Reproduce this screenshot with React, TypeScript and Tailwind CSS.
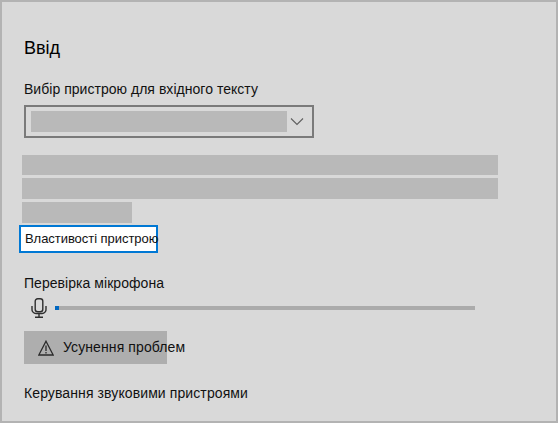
import React from "react";

export default function App() {
  return (
    <div className="w-[558px] h-[423px] bg-[#d9d9d9] border-2 border-[#b3b3b3] pl-[22px] pt-[36px] overflow-hidden text-black font-['Liberation_Sans',Arial,sans-serif]">
      <h2 className="text-[18px] leading-[20px] font-normal">Ввід</h2>

      <div className="mt-[22px] text-[14px] leading-[18px] tracking-[0.03px] text-[#111]">Вибір пристрою для вхідного тексту</div>

      <div className="mt-[7px] w-[290px] h-[33px] border-2 border-[#7a7a7a] flex items-center pl-[5px]">
        <div className="w-[256px] h-[21px] bg-[#b9b9b9]" />
        <svg className="ml-[2px] mt-[1px] shrink-0" width="16" height="10" viewBox="0 0 16 10" fill="none">
          <path d="M2 1.5 L8 7.5 L14 1.5" stroke="#5f5f5f" strokeWidth="1.1" />
        </svg>
      </div>

      {/* blanked-out description */}
      <div className="mt-[17px] -ml-[2px] flex flex-col gap-[3px]">
        <div className="w-[476px] h-[20px] bg-[#b9b9b9]" />
        <div className="w-[476px] h-[21px] bg-[#b9b9b9]" />
        <div className="w-[110px] h-[21px] bg-[#b9b9b9]" />
      </div>

      <div className="mt-[2px] -ml-[5px] w-[139px] h-[28px] border-2 border-[#0078d4] bg-white flex items-center pl-[4px] whitespace-nowrap text-[13px] tracking-[-0.05px] text-[#111]">
        Властивості пристрою
      </div>

      <div className="mt-[21px] text-[14px] leading-[18px] tracking-[0.05px] text-[#111]">Перевірка мікрофона</div>

      <div className="mt-[6px] flex items-center h-[20px]">
        <svg className="ml-[7px] shrink-0" width="16" height="20" viewBox="0 0 16 20" fill="none" stroke="#2e2e2e" strokeWidth="1.4">
          <rect x="4.2" y="0.7" width="7.6" height="13" rx="2.5" />
          <path d="M1 8 V11 A4 4 0 0 0 5 15.5 H11 A4 4 0 0 0 15 11 V8" />
          <path d="M8 15.5 V19 M4 19.3 H12" />
        </svg>
        <div className="ml-[8px] w-[420px] h-[4px] bg-[#ababab]">
          <div className="w-[4px] h-[4px] bg-[#0067c0]" />
        </div>
      </div>

      <div className="mt-[13px] w-[143px] h-[33px] bg-[#aeaeae] flex items-center pl-[14px] whitespace-nowrap">
        <svg className="shrink-0" width="16" height="16" viewBox="0 0 16 16" fill="none" stroke="#2b2b2b" strokeWidth="1.3">
          <path d="M8 1.2 L15.2 15 H0.8 Z" />
          <path d="M8 5.5 V11 M8 12 V13.5" />
        </svg>
        <span className="ml-[9px] text-[14px] tracking-[0.1px] text-[#111]">Усунення проблем</span>
      </div>

      <div className="mt-[20px] text-[14px] leading-[18px] tracking-[0.1px] text-[#111]">Керування звуковими пристроями</div>
    </div>
  );
}
